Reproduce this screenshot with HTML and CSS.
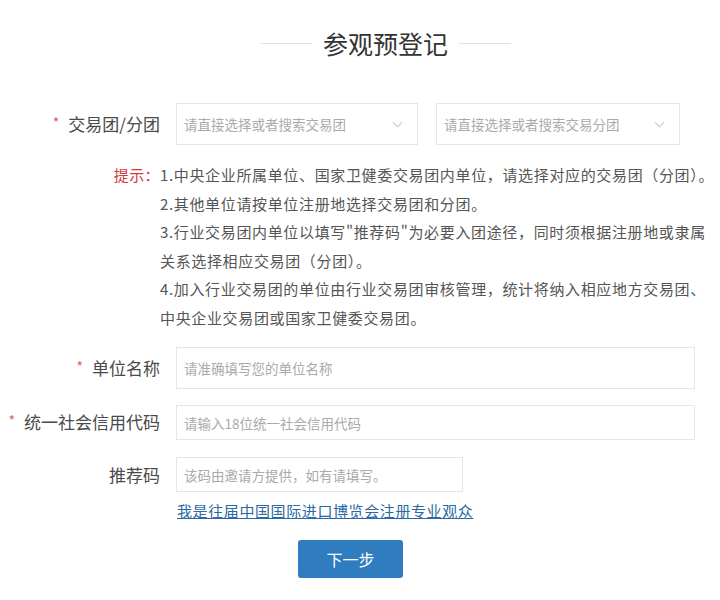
FILE: index.html
```html
<!DOCTYPE html>
<html lang="zh-CN">
<head>
<meta charset="utf-8">
<title>参观预登记</title>
<link rel="stylesheet" href="styles.css">
</head>
<body>
<div class="page">
  <div class="title-row">
    <span class="title-line"></span>
    <h1 class="title">参观预登记</h1>
    <span class="title-line"></span>
  </div>

  <div class="row row-select">
    <div class="label"><span class="req">*</span>交易团/分团</div>
    <div class="field">
      <div class="select sel-a"><span class="ph">请直接选择或者搜索交易团</span><span class="chev"></span></div>
      <div class="select sel-b"><span class="ph">请直接选择或者搜索交易分团</span><span class="chev"></span></div>
    </div>
  </div>

  <div class="hint">
    <div class="hint-label">提示：</div>
    <div class="hint-text">1.中央企业所属单位、国家卫健委交易团内单位，请选择对应的交易团（分团）。<br>2.其他单位请按单位注册地选择交易团和分团。<br>3.行业交易团内单位以填写"推荐码"为必要入团途径，同时须根据注册地或隶属<br>关系选择相应交易团（分团）。<br>4.加入行业交易团的单位由行业交易团审核管理，统计将纳入相应地方交易团、<br>中央企业交易团或国家卫健委交易团。</div>
  </div>

  <div class="row row-name">
    <div class="label"><span class="req">*</span>单位名称</div>
    <div class="field"><div class="input input-wide tall"><span class="ph">请准确填写您的单位名称</span></div></div>
  </div>

  <div class="row row-code">
    <div class="label"><span class="req">*</span>统一社会信用代码</div>
    <div class="field"><div class="input input-wide"><span class="ph">请输入18位统一社会信用代码</span></div></div>
  </div>

  <div class="row row-ref">
    <div class="label">推荐码</div>
    <div class="field"><div class="input input-short"><span class="ph">该码由邀请方提供，如有请填写。</span></div></div>
  </div>

  <div class="link-row"><a class="link" href="#">我是往届中国国际进口博览会注册专业观众</a></div>

  <div class="btn-row"><button class="btn">下一步</button></div>
</div>
</body>
</html>
```

FILE: styles.css
```css
* { box-sizing: border-box; }
html, body { margin: 0; padding: 0; background: #fff; }
body {
  font-family: "Noto Sans CJK SC", "Noto Sans", sans-serif;
  color: #444;
}
.page { width: 720px; height: 600px; overflow: hidden; }

.title-row {
  margin-top: 28px;
  height: 30px;
  display: flex;
  align-items: center;
  padding-left: 260px;
  gap: 11px;
}
.title-line { width: 52px; height: 1px; background: #e2e2e2; }
.title {
  margin: 0;
  font-size: 25px;
  font-weight: 400;
  line-height: 30px;
  color: #333;
}

.row { display: flex; align-items: center; }
.label {
  width: 160px;
  flex: none;
  text-align: right;
  font-size: 17px;
  color: #4a4a4a;
  line-height: 24px;
}
.req {
  color: #e06060;
  font-size: 14px;
  margin-right: 9px;
  position: relative;
  top: -3px;
}
.field { margin-left: 16px; display: flex; gap: 18px; }

.row-select { margin-top: 45px; }
.select {
  height: 42px;
  border: 1px solid #e6e6e6;
  display: flex;
  align-items: center;
  justify-content: space-between;
  padding: 0 16px 0 7px;
}
.sel-a { width: 242px; }
.sel-b { width: 244px; }
.ph { font-size: 13.5px; color: #aaa; white-space: nowrap; }
.chev {
  width: 7px; height: 7px;
  border-right: 1px solid #c8c8c8;
  border-bottom: 1px solid #c8c8c8;
  transform: rotate(45deg);
  margin-top: -4px;
}

.hint { margin-top: 16px; display: flex; font-size: 15px; line-height: 28.5px; }
.hint-label { width: 160px; flex: none; text-align: right; color: #d33a3a; letter-spacing: 0.4px; }
.hint-text { white-space: nowrap; color: #555; letter-spacing: 0.65px; }

.input {
  border: 1px solid #e6e6e6;
  height: 35px;
  display: flex;
  align-items: center;
  padding: 0 7px;
}
.input.tall { height: 42px; }
.input-wide { width: 519px; }
.input-short { width: 287px; }

.row-name { margin-top: 15px; }
.row-code { margin-top: 16px; }
.row-ref { margin-top: 17px; }

.link-row { margin-top: 8px; padding-left: 177px; line-height: 20px; }
.link {
  font-size: 15px;
  color: #2a68a3;
  letter-spacing: 0.6px;
  text-decoration: underline;
}

.btn-row { margin-top: 19px; padding-left: 298px; }
.btn {
  width: 105px;
  height: 38px;
  border: none;
  border-radius: 3px;
  background: #2f7cbf;
  color: #fff;
  font-family: "Noto Sans CJK SC", sans-serif;
  font-size: 16px;
  padding: 0;
}
```
